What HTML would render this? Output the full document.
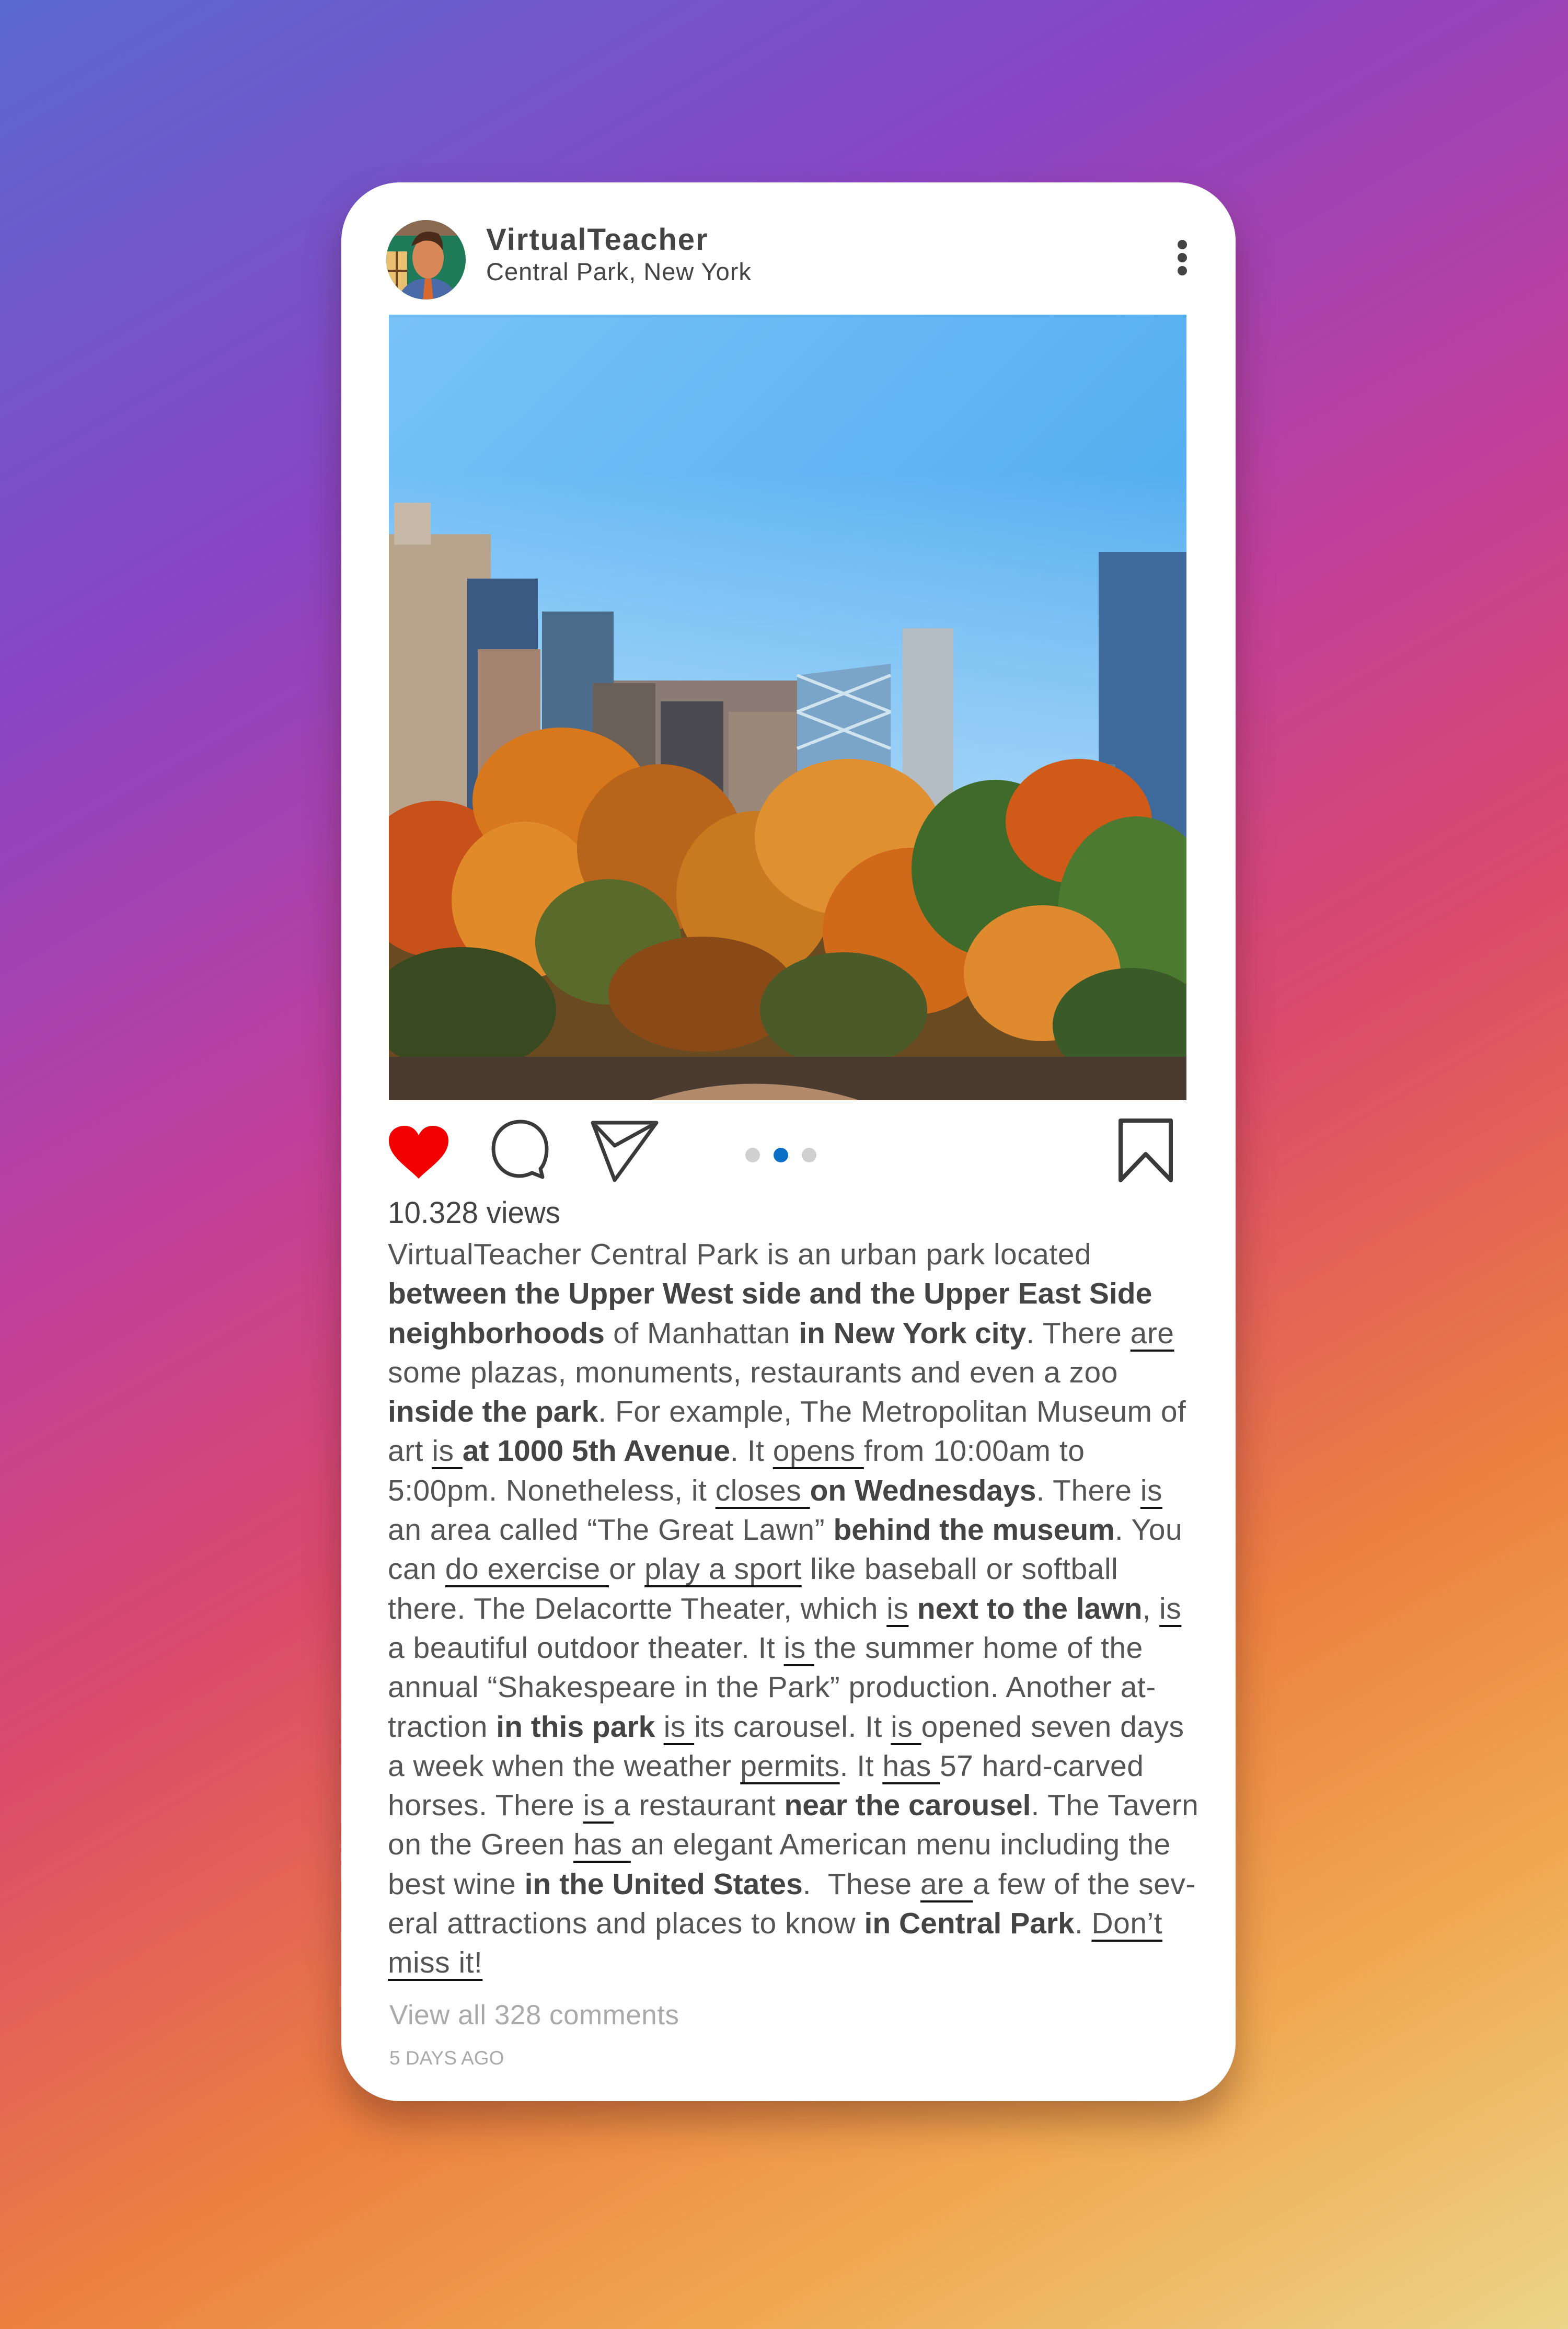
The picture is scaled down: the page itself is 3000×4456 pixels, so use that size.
<!DOCTYPE html>
<html><head><meta charset="utf-8"><style>
*{margin:0;padding:0;box-sizing:border-box}
html,body{width:3000px;height:4456px;overflow:hidden}
body{position:relative;font-family:"Liberation Sans",sans-serif;
background:linear-gradient(150deg,#5a68d0 0%,#8a45c4 22%,#c03f9c 40%,#dc4a6a 55%,#ec8040 72%,#f0a850 85%,#ecd488 100%);}
.card{position:absolute;left:653px;top:349px;width:1711px;height:3671px;background:#fff;border-radius:112px;box-shadow:0 40px 70px rgba(60,20,20,.35)}
.abs{position:absolute}
.name{left:930px;top:425px;font-size:58px;font-weight:bold;color:#444;letter-spacing:2px}
.loc{left:930px;top:492px;font-size:47px;color:#444;letter-spacing:1px}
.views{left:742px;top:2287px;font-size:58px;color:#444;transform:scaleX(.975);transform-origin:left}
.cap{left:742px;top:2363px;font-size:57px;line-height:75.3px;color:#555;white-space:nowrap;letter-spacing:.5px}
.cap b{color:#444;letter-spacing:0}
.cap u{text-decoration:underline;text-decoration-color:#111;text-decoration-thickness:4px;text-underline-offset:12px}
.vc{left:745px;top:3825px;font-size:53px;color:#aaa;letter-spacing:.5px}
.ago{left:745px;top:3917px;font-size:37px;color:#aaa}
</style></head><body>
<div class="card"></div>
<svg class="abs" style="left:739px;top:421px" width="152" height="152" viewBox="0 0 152 152">
<defs><clipPath id="c"><circle cx="76" cy="76" r="76"/></clipPath></defs>
<g clip-path="url(#c)">
<rect width="152" height="152" fill="#1f7a5a"/>
<rect x="0" y="0" width="152" height="30" fill="#8a6a50"/>
<rect x="0" y="60" width="40" height="80" fill="#e8c070"/>
<rect x="18" y="60" width="4" height="80" fill="#6a4020"/>
<rect x="0" y="95" width="40" height="4" fill="#6a4020"/>
<ellipse cx="80" cy="72" rx="30" ry="40" fill="#d88858"/>
<path d="M48 50 Q60 12 100 26 Q110 40 108 58 Q96 36 70 40 Z" fill="#4a2a18"/>
<path d="M20 152 Q40 110 80 112 Q120 110 140 152 Z" fill="#4a6aa8"/>
<path d="M74 112 L86 112 L90 152 L70 152 Z" fill="#d86a30"/>
</g></svg>
<div class="abs name">VirtualTeacher</div>
<div class="abs loc">Central Park, New York</div>
<svg class="abs" style="left:2250px;top:458px" width="24" height="70"><circle cx="12" cy="10" r="9" fill="#444"/><circle cx="12" cy="35" r="9" fill="#444"/><circle cx="12" cy="60" r="9" fill="#444"/></svg>
<svg class="abs" style="left:744px;top:602px" width="1526" height="1503" viewBox="0 0 1526 1503">
<defs>
<linearGradient id="sky" x1="0" y1="0" x2="1" y2="1"><stop offset="0" stop-color="#78c2f8"/><stop offset="1" stop-color="#3ea2ea"/></linearGradient>
<linearGradient id="sky2" x1="0" y1="0" x2="0" y2="1"><stop offset="0" stop-color="rgba(255,255,255,0)"/><stop offset="1" stop-color="rgba(220,240,255,.6)"/></linearGradient>
</defs>
<rect width="1526" height="1503" fill="url(#sky)"/>
<rect y="300" width="1526" height="700" fill="url(#sky2)"/>
<rect x="300" y="700" width="560" height="300" fill="#8a7c74"/>
<rect x="0" y="420" width="195" height="620" fill="#b8a48c"/>
<rect x="10" y="360" width="70" height="80" fill="#c8b8a8"/>
<rect x="150" y="505" width="135" height="500" fill="#3a5a82"/>
<rect x="170" y="640" width="120" height="360" fill="#a48470"/>
<rect x="293" y="568" width="137" height="420" fill="#4c6c8c"/>
<rect x="390" y="705" width="120" height="300" fill="#6a6058"/>
<rect x="520" y="740" width="120" height="280" fill="#4a4a50"/>
<rect x="650" y="760" width="130" height="260" fill="#9a8878"/>
<polygon points="781,690 960,668 960,900 781,900" fill="#7aa4c8"/>
<path d="M781 690 L960 760 M781 760 L960 690 M781 760 L960 830 M781 830 L960 760" stroke="#d0e4f0" stroke-width="6"/>
<rect x="983" y="600" width="97" height="380" fill="#b4bcc4"/>
<rect x="1358" y="454" width="168" height="700" fill="#3d6a9a"/>
<rect x="1330" y="860" width="60" height="300" fill="#5a7fa8"/>
<rect x="0" y="1050" width="1526" height="453" fill="#6a4a20"/>
<g>
<ellipse cx="90" cy="1080" rx="150" ry="150" fill="#c8501a"/>
<ellipse cx="330" cy="930" rx="170" ry="140" fill="#d8781c"/>
<ellipse cx="260" cy="1120" rx="140" ry="150" fill="#e08a2a"/>
<ellipse cx="520" cy="1020" rx="160" ry="160" fill="#b8641a"/>
<ellipse cx="420" cy="1200" rx="140" ry="120" fill="#5a6a2a"/>
<ellipse cx="700" cy="1110" rx="150" ry="160" fill="#c87a20"/>
<ellipse cx="880" cy="1000" rx="180" ry="150" fill="#e09030"/>
<ellipse cx="1000" cy="1180" rx="170" ry="160" fill="#d06a1a"/>
<ellipse cx="1160" cy="1060" rx="160" ry="170" fill="#3f6a2a"/>
<ellipse cx="1320" cy="970" rx="140" ry="120" fill="#d05a18"/>
<ellipse cx="1430" cy="1140" rx="150" ry="180" fill="#4c7a30"/>
<ellipse cx="1250" cy="1260" rx="150" ry="130" fill="#e08a30"/>
<ellipse cx="140" cy="1330" rx="180" ry="120" fill="#3a4a20"/>
<ellipse cx="600" cy="1300" rx="180" ry="110" fill="#8a4a18"/>
<ellipse cx="870" cy="1330" rx="160" ry="110" fill="#4a5a28"/>
<ellipse cx="1420" cy="1360" rx="150" ry="110" fill="#3a5a28"/>
</g>
<rect y="1420" width="1526" height="83" fill="#4a3a30"/>
<path d="M500 1503 Q700 1440 900 1503 Z" fill="#b08a6a"/>
</svg>
<svg class="abs" style="left:736px;top:2150px" width="130" height="110" viewBox="0 0 130 110"><path d="M65 105 C40 80 8 62 8 32 C8 14 22 4 38 4 C52 4 60 12 65 22 C70 12 78 4 92 4 C108 4 122 14 122 32 C122 62 90 80 65 105Z" fill="#f20000"/></svg>
<svg class="abs" style="left:938px;top:2140px" width="116" height="124" viewBox="0 0 116 124"><path d="M80 104 C72 108 64 110 56 110 C28 110 6 88 6 58 C6 28 28 6 58 6 C86 6 108 28 108 58 C108 76 102 90 96 96 L100 112 Z" fill="none" stroke="#3a3a3a" stroke-width="7" stroke-linejoin="round"/></svg>
<svg class="abs" style="left:1128px;top:2140px" width="136" height="124" viewBox="0 0 136 124"><path d="M6 8 L128 8 L48 118 Z M6 8 L48 52 L128 8" fill="none" stroke="#3a3a3a" stroke-width="7" stroke-linejoin="round"/></svg>
<svg class="abs" style="left:1420px;top:2192px" width="150" height="36"><circle cx="20" cy="18" r="14" fill="#d0d0d0"/><circle cx="74" cy="18" r="14" fill="#0b6fc6"/><circle cx="128" cy="18" r="14" fill="#d0d0d0"/></svg>
<svg class="abs" style="left:2136px;top:2136px" width="112" height="128" viewBox="0 0 112 128"><path d="M8 8 L104 8 L104 122 L56 72 L8 122 Z" fill="none" stroke="#3a3a3a" stroke-width="8" stroke-linejoin="round"/></svg>
<div class="abs views">10.328 views</div>
<div class="abs cap">
VirtualTeacher Central Park is an urban park located<br>
<b>between the Upper West side and the Upper East Side</b><br>
<b>neighborhoods</b> of Manhattan <b>in New York city</b>. There <u>are</u><br>
some plazas, monuments, restaurants and even a zoo<br>
<b>inside the park</b>. For example, The Metropolitan Museum of<br>
art <u>is </u><b>at 1000 5th Avenue</b>. It <u>opens </u>from 10:00am to<br>
5:00pm. Nonetheless, it <u>closes </u><b>on Wednesdays</b>. There <u>is </u><br>
an area called “The Great Lawn” <b>behind the museum</b>. You<br>
can <u>do exercise </u>or <u>play a sport</u> like baseball or softball<br>
there. The Delacortte Theater, which <u>is</u> <b>next to the lawn</b>, <u>is</u><br>
a beautiful outdoor theater. It <u>is </u>the summer home of the<br>
annual “Shakespeare in the Park” production. Another at-<br>
traction <b>in this park</b> <u>is </u>its carousel. It <u>is </u>opened seven days<br>
a week when the weather <u>permits</u>. It <u>has </u>57 hard-carved<br>
horses. There <u>is </u>a restaurant <b>near the carousel</b>. The Tavern<br>
on the Green <u>has </u>an elegant American menu including the<br>
best wine <b>in the United States</b>.&nbsp; These <u>are </u>a few of the sev-<br>
eral attractions and places to know <b>in Central Park</b>. <u>Don’t</u><br>
<u>miss it!</u>
</div>
<div class="abs vc">View all 328 comments</div>
<div class="abs ago">5 DAYS AGO</div>
</body></html>
